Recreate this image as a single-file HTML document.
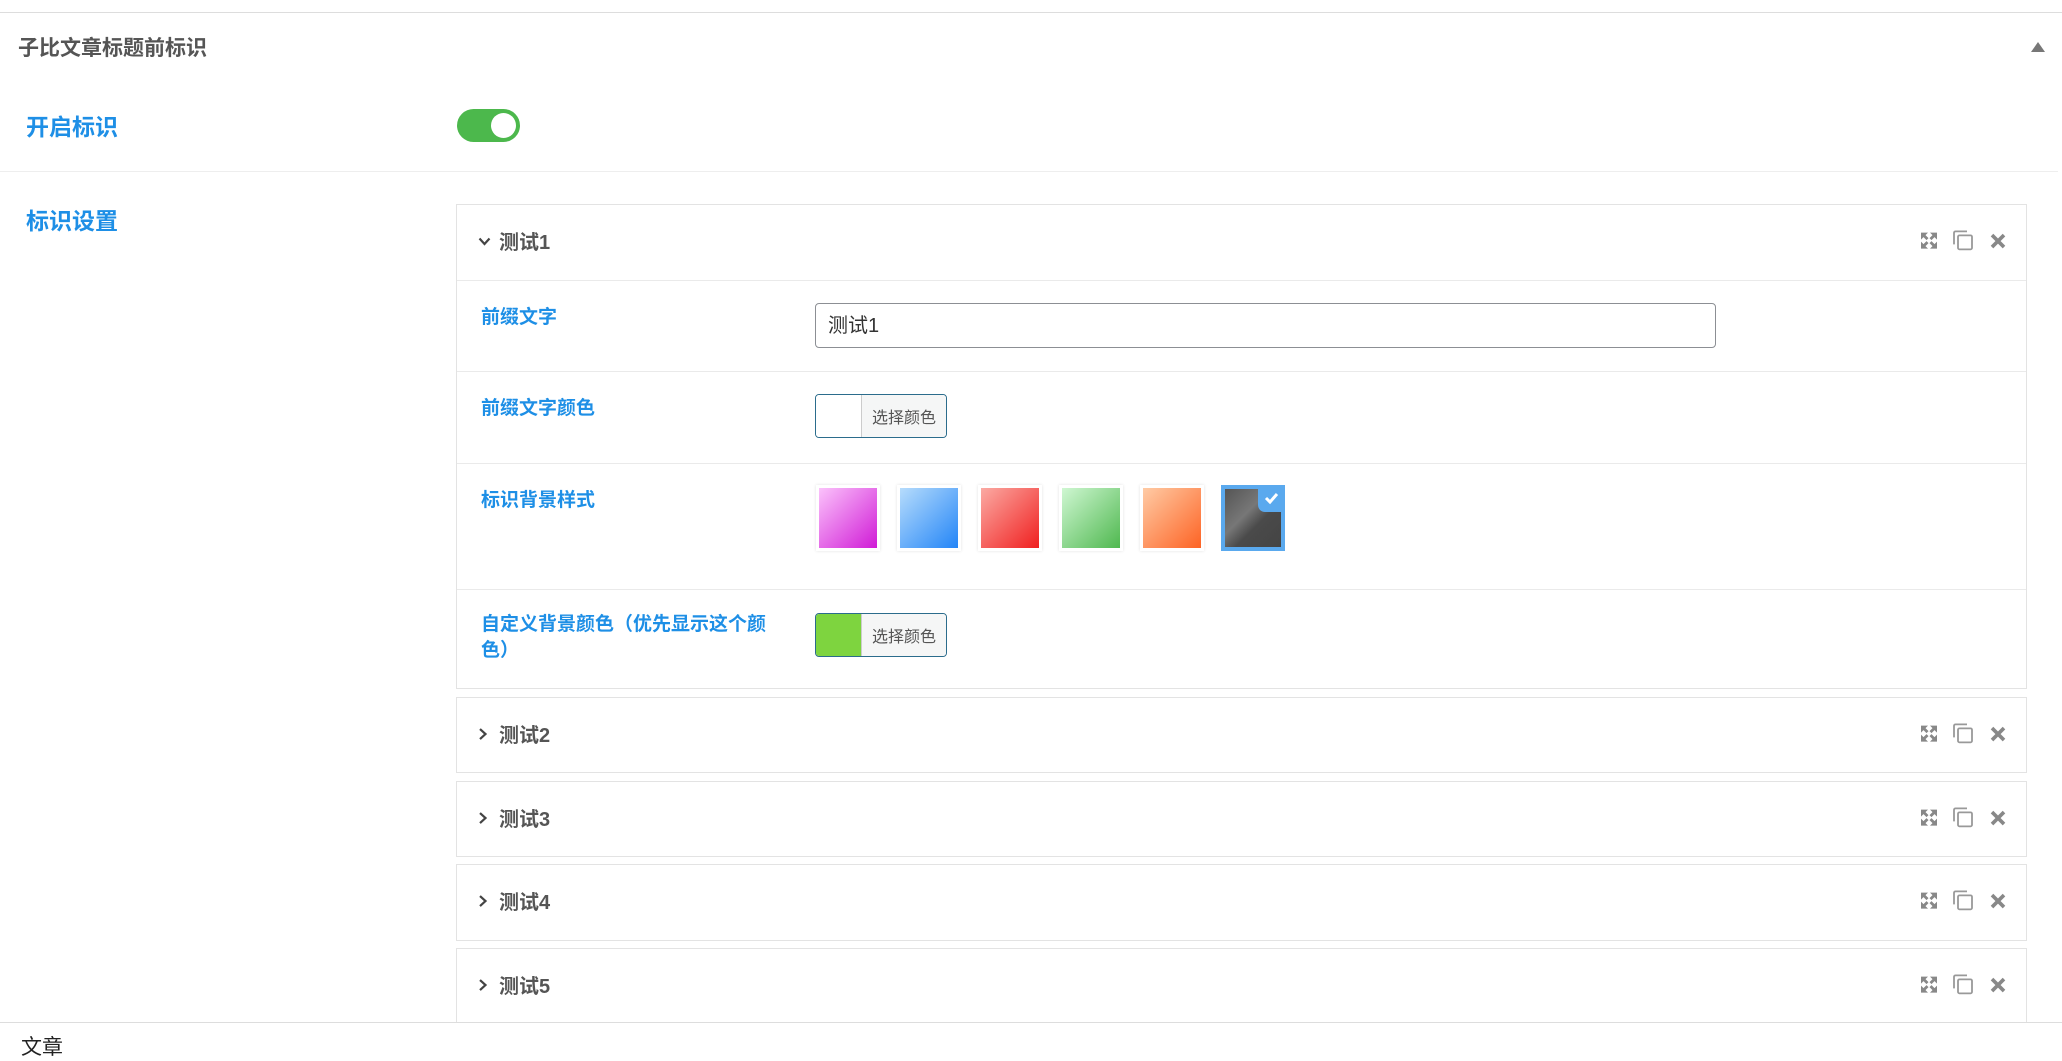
<!DOCTYPE html>
<html><head><meta charset="utf-8"><style>
*{box-sizing:border-box;margin:0;padding:0}
body{width:2062px;height:1044px;overflow:hidden;background:#fff;position:relative;font-family:"Liberation Sans","Noto Sans CJK SC",sans-serif}
.a{position:absolute}
.blue{color:#1e8fe6;font-weight:bold}
.box{position:absolute;left:456px;width:1571px;border:1px solid #e3e3e3;background:#fff}
.hd{position:relative;height:75px}
.hd .t{position:absolute;left:42px;top:50%;transform:translateY(-58%);font-size:20px;font-weight:bold;color:#555}
.hd .ch{position:absolute;left:21px;top:50%;transform:translateY(-65%)}
.ic{position:absolute;top:50%;transform:translateY(-62%)}
.row{position:relative;border-top:1px solid #eaeaea}
.row .l{position:absolute;left:24px;top:24px;font-size:19px;line-height:26px;width:310px}
.pick{position:absolute;left:358px;width:132px;height:44px;border:1.5px solid #2b6c8c;border-radius:4px;overflow:hidden;display:flex}
.pick .s{width:46px;height:100%;border-right:1px solid #ccc}
.pick .b{flex:1;background:#f5f6f6;font-size:16px;color:#555;display:flex;align-items:center;justify-content:center}
.sw{position:absolute;top:21px;width:64px;height:66px;padding:3px;background:#fff;box-shadow:0 0 3px rgba(0,0,0,.12)}
.sw div{width:100%;height:100%}
</style></head><body>
<div class="a" style="left:0;top:12px;width:2062px;height:1px;background:#ddd"></div>
<div class="a" style="left:18px;top:32px;font-size:21px;font-weight:bold;color:#555">子比文章标题前标识</div>
<svg class="a" style="left:2031px;top:42px" width="14" height="10"><polygon points="7,0 14,10 0,10" fill="#777"/></svg>
<div class="a blue" style="left:26px;top:108px;font-size:23px">开启标识</div>
<div class="a" style="left:457px;top:109px;width:63px;height:33px;border-radius:17px;background:#4cb84c"><div style="position:absolute;right:4px;top:4px;width:25px;height:25px;border-radius:50%;background:#fff"></div></div>
<div class="a" style="left:0;top:171px;width:2058px;height:1px;background:#eee"></div>
<div class="a blue" style="left:26px;top:202px;font-size:23px">标识设置</div>

<div class="box" style="top:204px;height:485px">
 <div class="hd">
  <svg class="ch" width="13" height="10"><path d="M1.5 2 L6.5 7.5 L11.5 2" stroke="#444" stroke-width="2.2" fill="none"/></svg>
  <div class="t">测试1</div>
  <svg class="ic" style="left:1462px" width="20" height="20"><path d="M2 2h7l-2.5 2.5 3 3-2 2-3-3L2 9zM18 2v7l-2.5-2.5-3 3-2-2 3-3L11 2zM2 18v-7l2.5 2.5 3-3 2 2-3 3L9 18zM18 18h-7l2.5-2.5-3-3 2-2 3 3L18 11z" fill="#888"/></svg>
  <svg class="ic" style="left:1495px" width="22" height="22"><path d="M2 15V3.5C2 2.7 2.7 2 3.5 2H15" stroke="#999" stroke-width="1.8" fill="none"/><rect x="6" y="6" width="14" height="14" rx="1.5" stroke="#999" stroke-width="1.8" fill="none"/></svg>
  <svg class="ic" style="left:1533px" width="16" height="16"><path d="M2 2L14 14M14 2L2 14" stroke="#888" stroke-width="3.6"/></svg>
 </div>
 <div class="row" style="height:91px"><div class="l blue">前缀文字</div>
  <div class="a" style="left:358px;top:22px;width:901px;height:45px;border:1px solid #8c8f94;border-radius:4px;font-size:20px;color:#333;padding:10px 12px;line-height:24px">测试1</div></div>
 <div class="row" style="height:92px"><div class="l blue">前缀文字颜色</div>
  <div class="pick" style="top:22px"><div class="s" style="background:#fff"></div><div class="b">选择颜色</div></div></div>
 <div class="row" style="height:126px"><div class="l blue">标识背景样式</div>
  <div class="sw" style="left:359px"><div style="background:linear-gradient(135deg,#fbc2fb,#d01bd6)"></div></div>
  <div class="sw" style="left:440px"><div style="background:linear-gradient(135deg,#b6dcfc,#2385f7)"></div></div>
  <div class="sw" style="left:521px"><div style="background:linear-gradient(135deg,#fbaaa3,#f01f1f)"></div></div>
  <div class="sw" style="left:602px"><div style="background:linear-gradient(135deg,#cff7d2,#4fb84f)"></div></div>
  <div class="sw" style="left:683px"><div style="background:linear-gradient(135deg,#ffcba5,#fd6324)"></div></div>
  <div class="sw" style="left:764px;background:#5aa9ee;box-shadow:none;padding:4px"><div style="background:linear-gradient(135deg,#555 0%,#777 40%,#4a4a4a 60%,#444 100%)"></div>
   <div style="position:absolute;right:0;top:0;width:27px;height:27px;background:#5aa9ee;border-bottom-left-radius:7px"><svg width="27" height="27" style="position:absolute;left:0;top:0"><path d="M8 13l4 4 7-8" stroke="#fff" stroke-width="3" fill="none"/></svg></div></div></div>
 <div class="row" style="height:100px"><div class="l blue" style="top:22px">自定义背景颜色（优先显示这个颜色）</div>
  <div class="pick" style="top:23px"><div class="s" style="background:#7ed43f"></div><div class="b">选择颜色</div></div></div>
</div>

<div class="box" style="top:697px;height:76px"><div class="hd"><svg class="ch" width="10" height="13"><path d="M2 1.5L7.5 6.5L2 11.5" stroke="#444" stroke-width="2.2" fill="none"/></svg><div class="t">测试2</div>
 <svg class="ic" style="left:1462px" width="20" height="20"><path d="M2 2h7l-2.5 2.5 3 3-2 2-3-3L2 9zM18 2v7l-2.5-2.5-3 3-2-2 3-3L11 2zM2 18v-7l2.5 2.5 3-3 2 2-3 3L9 18zM18 18h-7l2.5-2.5-3-3 2-2 3 3L18 11z" fill="#888"/></svg>
 <svg class="ic" style="left:1495px" width="22" height="22"><path d="M2 15V3.5C2 2.7 2.7 2 3.5 2H15" stroke="#999" stroke-width="1.8" fill="none"/><rect x="6" y="6" width="14" height="14" rx="1.5" stroke="#999" stroke-width="1.8" fill="none"/></svg>
 <svg class="ic" style="left:1533px" width="16" height="16"><path d="M2 2L14 14M14 2L2 14" stroke="#888" stroke-width="3.6"/></svg></div></div>
<div class="box" style="top:781px;height:76px"><div class="hd"><svg class="ch" width="10" height="13"><path d="M2 1.5L7.5 6.5L2 11.5" stroke="#444" stroke-width="2.2" fill="none"/></svg><div class="t">测试3</div>
 <svg class="ic" style="left:1462px" width="20" height="20"><path d="M2 2h7l-2.5 2.5 3 3-2 2-3-3L2 9zM18 2v7l-2.5-2.5-3 3-2-2 3-3L11 2zM2 18v-7l2.5 2.5 3-3 2 2-3 3L9 18zM18 18h-7l2.5-2.5-3-3 2-2 3 3L18 11z" fill="#888"/></svg>
 <svg class="ic" style="left:1495px" width="22" height="22"><path d="M2 15V3.5C2 2.7 2.7 2 3.5 2H15" stroke="#999" stroke-width="1.8" fill="none"/><rect x="6" y="6" width="14" height="14" rx="1.5" stroke="#999" stroke-width="1.8" fill="none"/></svg>
 <svg class="ic" style="left:1533px" width="16" height="16"><path d="M2 2L14 14M14 2L2 14" stroke="#888" stroke-width="3.6"/></svg></div></div>
<div class="box" style="top:864px;height:77px"><div class="hd"><svg class="ch" width="10" height="13"><path d="M2 1.5L7.5 6.5L2 11.5" stroke="#444" stroke-width="2.2" fill="none"/></svg><div class="t">测试4</div>
 <svg class="ic" style="left:1462px" width="20" height="20"><path d="M2 2h7l-2.5 2.5 3 3-2 2-3-3L2 9zM18 2v7l-2.5-2.5-3 3-2-2 3-3L11 2zM2 18v-7l2.5 2.5 3-3 2 2-3 3L9 18zM18 18h-7l2.5-2.5-3-3 2-2 3 3L18 11z" fill="#888"/></svg>
 <svg class="ic" style="left:1495px" width="22" height="22"><path d="M2 15V3.5C2 2.7 2.7 2 3.5 2H15" stroke="#999" stroke-width="1.8" fill="none"/><rect x="6" y="6" width="14" height="14" rx="1.5" stroke="#999" stroke-width="1.8" fill="none"/></svg>
 <svg class="ic" style="left:1533px" width="16" height="16"><path d="M2 2L14 14M14 2L2 14" stroke="#888" stroke-width="3.6"/></svg></div></div>
<div class="box" style="top:948px;height:90px"><div class="hd"><svg class="ch" width="10" height="13"><path d="M2 1.5L7.5 6.5L2 11.5" stroke="#444" stroke-width="2.2" fill="none"/></svg><div class="t">测试5</div>
 <svg class="ic" style="left:1462px" width="20" height="20"><path d="M2 2h7l-2.5 2.5 3 3-2 2-3-3L2 9zM18 2v7l-2.5-2.5-3 3-2-2 3-3L11 2zM2 18v-7l2.5 2.5 3-3 2 2-3 3L9 18zM18 18h-7l2.5-2.5-3-3 2-2 3 3L18 11z" fill="#888"/></svg>
 <svg class="ic" style="left:1495px" width="22" height="22"><path d="M2 15V3.5C2 2.7 2.7 2 3.5 2H15" stroke="#999" stroke-width="1.8" fill="none"/><rect x="6" y="6" width="14" height="14" rx="1.5" stroke="#999" stroke-width="1.8" fill="none"/></svg>
 <svg class="ic" style="left:1533px" width="16" height="16"><path d="M2 2L14 14M14 2L2 14" stroke="#888" stroke-width="3.6"/></svg></div></div>

<div class="a" style="left:0;top:1022px;width:2062px;height:22px;background:#fff;border-top:1px solid #ddd"></div>
<div class="a" style="left:21px;top:1031px;font-size:21px;color:#222">文章</div>
</body></html>
